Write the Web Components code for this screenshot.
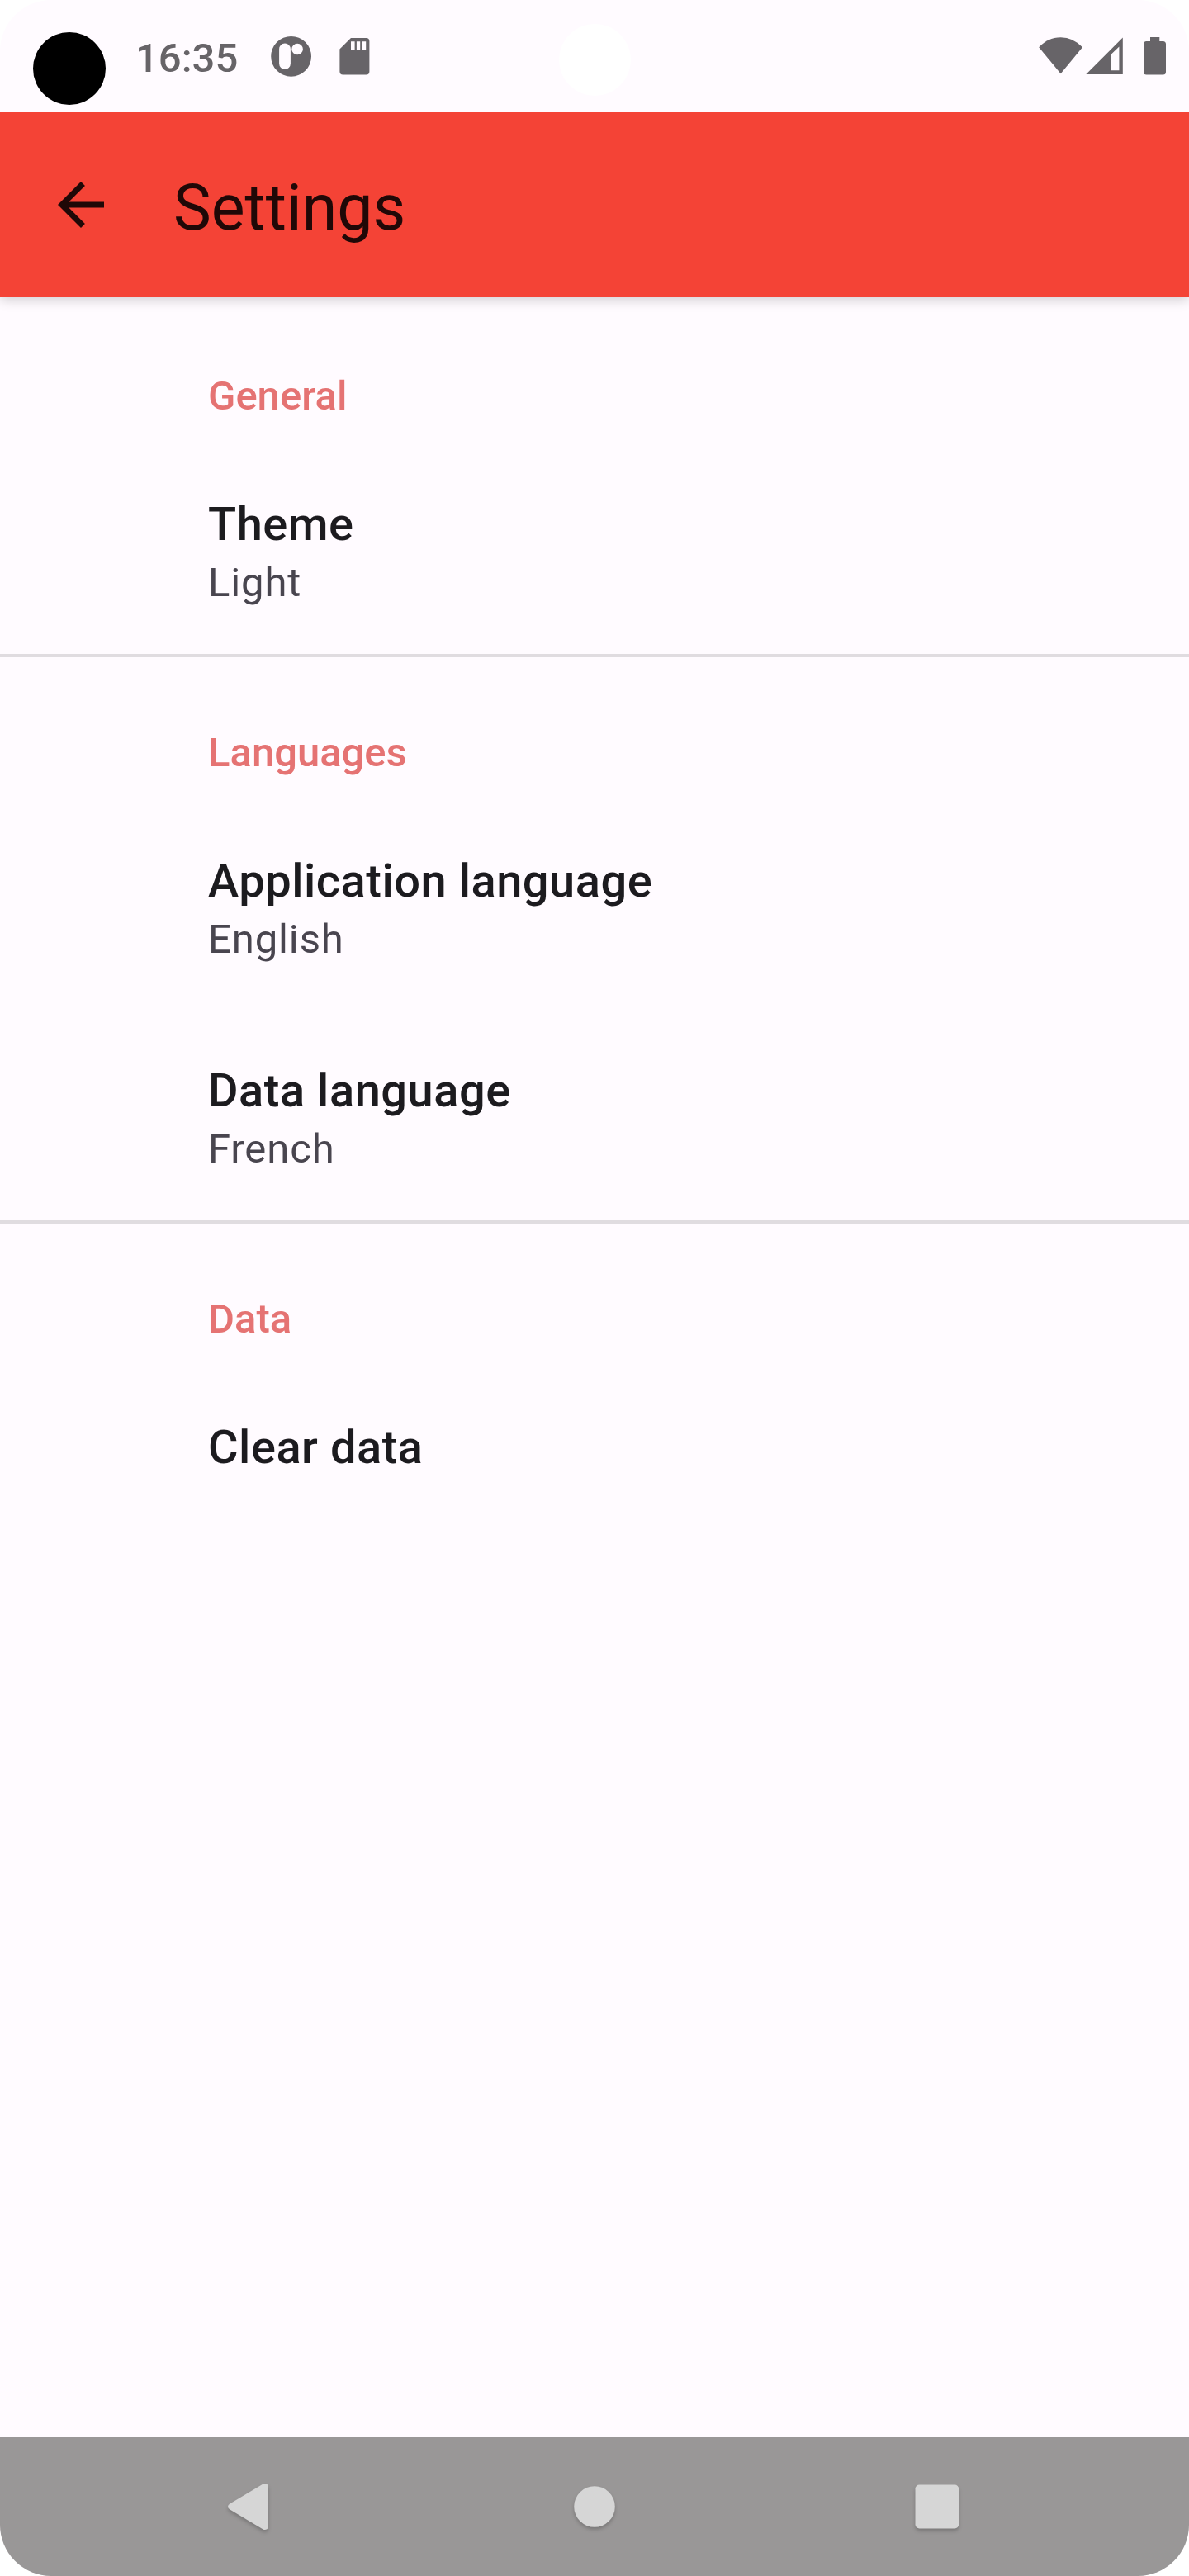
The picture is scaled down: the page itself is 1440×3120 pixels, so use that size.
<!DOCTYPE html>
<html lang="en">
<head>
<meta charset="utf-8">
<title>Settings</title>
<style>
html,body{margin:0;background:#fff}
body{font-family:Roboto,sans-serif}
</style>
</head>
<body>
<phone-screen>
  <status-bar slot="status">16:35</status-bar>
  <app-bar slot="bar">Settings</app-bar>
  <settings-group heading="General">
    <settings-item summary="Light">Theme</settings-item>
  </settings-group>
  <settings-group heading="Languages" divided>
    <settings-item summary="English">Application language</settings-item>
    <settings-item summary="French">Data language</settings-item>
  </settings-group>
  <settings-group heading="Data" divided>
    <settings-item>Clear data</settings-item>
  </settings-group>
  <nav-bar slot="nav"></nav-bar>
</phone-screen>
<script>
function define(name, html, setup) {
  customElements.define(name, class extends HTMLElement {
    constructor() {
      super();
      this.attachShadow({mode: 'open'}).innerHTML = html;
    }
    connectedCallback() { if (setup) setup(this, this.shadowRoot); }
  });
}

define('phone-screen', `<style>
:host{display:flex;flex-direction:column;position:relative;width:1440px;height:3120px;background:#fffbff;border-radius:62px;overflow:hidden}
main{flex:1}
.cam{position:absolute;border-radius:50%}
.a{left:40px;top:39px;width:88px;height:88px;background:#000}
.b{left:677px;top:29px;width:87px;height:87px;background:#fff}
</style><slot name="status"></slot><slot name="bar"></slot><main><slot></slot></main><slot name="nav"></slot>
<div class="cam a"></div><div class="cam b"></div>`);

define('status-bar', `<style>
:host{display:flex;height:136px;box-sizing:border-box;padding:0 28px 0 164px;color:#676468;font-size:49px;line-height:70px;font-weight:500}
span{padding-top:36px;width:164px}
svg{display:block;fill:#676468}
.r{margin-left:auto}
</style><span><slot></slot></span>
<svg width="120" height="136" viewBox="328 0 120 136">
<path fill-rule="evenodd" d="M352.6 43.9a24.4 24.4 0 1 1 0 48.8a24.4 24.4 0 1 1 0-48.8z M345 52.5a6.9 6.9 0 0 0-6.9 6.9v17.7a6.9 6.9 0 0 0 13.8 0v-17.7a6.9 6.9 0 0 0-6.9-6.9z M360.1 52.7a6.8 6.8 0 1 0 0 13.6a6.8 6.8 0 1 0 0-13.6z"/>
<path fill-rule="evenodd" d="M425 46h18.4a4 4 0 0 1 4 4v36.4a4 4 0 0 1-4 4h-28a4 4 0 0 1-4-4V59.6z M425 50.3v9.7h4.6v-9.7z M431.9 50.3v9.7h4.3v-9.7z M438.7 50.3v9.7h4.5v-9.7z"/>
</svg>
<svg class="r" width="156" height="136" viewBox="1256 0 156 136">
<path d="M1284.6 89.3L1258.2 57.3Q1269.5 45.2 1284.6 45.2T1311 57.3z"/>
<path fill-rule="evenodd" d="M1359.8 45.5V90h-44.5z M1355.4 56.6L1346 65.6V85.3h9.4z"/>
<path d="M1393 45h11.3v5h4.2a3.5 3.5 0 0 1 3.5 3.5v33.4a3.5 3.5 0 0 1-3.5 3.5h-20a3.5 3.5 0 0 1-3.5-3.5V53.5a3.5 3.5 0 0 1 3.5-3.5h4.5z"/>
</svg>`);

define('app-bar', `<style>
:host{display:flex;align-items:center;height:224px;box-sizing:border-box;padding-left:56px;gap:70px;background:#f44336;color:rgba(0,0,0,.87);font-size:77px;box-shadow:0 3px 14px rgba(0,0,0,.19);clip-path:inset(0 0 -30px 0)}
svg{width:84px;height:84px;fill:currentColor}
span{line-height:100px;padding-top:8px}
</style><svg viewBox="0 0 24 24"><path d="M20 11H7.83l5.59-5.59L12 4l-8 8 8 8 1.41-1.41L7.83 13H20z"/></svg><span><slot></slot></span>`);

define('settings-group', `<style>
:host{display:flex;flex-direction:column;padding:85px 0 52px}
:host([divided]){border-top:4px solid #e0dce0;padding-top:81px}
h2{margin:0 0 85px;padding-left:252px;font-size:49px;line-height:70px;font-weight:500;color:#e57373}
.items{display:flex;flex-direction:column;gap:114px}
</style><h2></h2><div class="items"><slot></slot></div>`,
(el, root) => { root.querySelector('h2').textContent = el.getAttribute('heading'); });

define('settings-item', `<style>
:host{display:flex;flex-direction:column;padding-left:252px;line-height:70px}
.title{font-size:56px;font-weight:500;color:#1c1b1f;letter-spacing:.525px}
.sub{font-size:49px;color:#49454f;letter-spacing:.875px;margin:1px 0 -1px}
</style><div class="title"><slot></slot></div>`,
(el, root) => {
  const text = el.getAttribute('summary');
  if (!text || root.querySelector('.sub')) return;
  const sub = document.createElement('div');
  sub.className = 'sub';
  sub.textContent = text;
  root.append(sub);
});

define('nav-bar', `<style>
:host{display:flex;align-items:center;justify-content:space-between;height:168px;box-sizing:border-box;padding:0 270px;background:#999797}
svg{display:block;width:70px;height:80px;fill:#d6d6d6;filter:drop-shadow(0 3px 2px rgba(0,0,0,.2))}
</style>
<svg viewBox="270 2996 70 80"><path d="M278 3032.8L318.6 3008.6Q321 3007.3 323.4 3008.8Q325 3010 325 3012V3060Q325 3062 323.4 3063.3Q321 3064.8 318.6 3063.5L278 3039.3Q276 3038 276 3036T278 3032.8z"/></svg>
<svg viewBox="685 2996 70 80"><circle cx="720" cy="3036" r="24.8"/></svg>
<svg viewBox="1100 2996 70 80"><rect x="1108.5" y="3009.5" width="52.7" height="53" rx="5"/></svg>`);
</script>
</body>
</html>
